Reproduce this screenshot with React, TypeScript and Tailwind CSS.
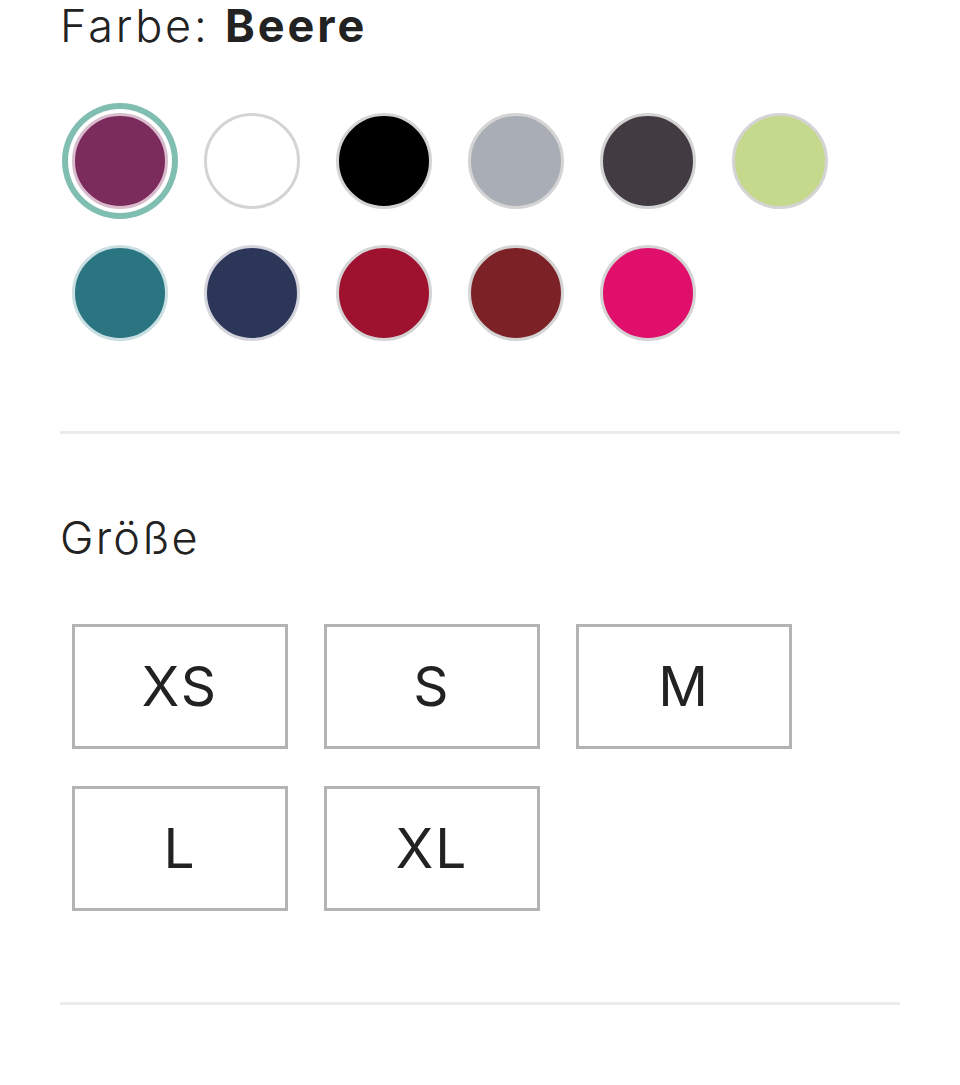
import React, { useState } from 'react';

const colors = [
  { name: 'Beere', hex: '#7c2b5d', border: '#d8bccd' },
  { name: 'Weiß', hex: '#ffffff', border: '#d4d4d4' },
  { name: 'Schwarz', hex: '#000000', border: '#d4d4d4' },
  { name: 'Grau', hex: '#a9adb5', border: '#d4d4d4' },
  { name: 'Anthrazit', hex: '#423c42', border: '#d4d4d4' },
  { name: 'Limette', hex: '#c5d98c', border: '#d4d4d4' },
  { name: 'Petrol', hex: '#2a7581', border: '#c9dfe2' },
  { name: 'Navy', hex: '#2b3659', border: '#d4d4dc' },
  { name: 'Rot', hex: '#9e1230', border: '#d4d4d4' },
  { name: 'Bordeaux', hex: '#7c2226', border: '#d4d4d4' },
  { name: 'Pink', hex: '#df0f6b', border: '#d4d4d4' },
];

const sizes = ['XS', 'S', 'M', 'L', 'XL'];

export default function App() {
  const [selectedColor, setSelectedColor] = useState(0);
  const [selectedSize, setSelectedSize] = useState<string | null>(null);

  return (
    <div
      className="w-[960px] h-[1085px] bg-white text-[#222] overflow-hidden"
      style={{ fontFamily: 'Inter, "DejaVu Sans", sans-serif' }}
    >
      <div className="px-[60px]">
        {/* Farbe */}
        <h2 className="text-[45px] leading-none font-light tracking-[2.8px] mt-[3px]">
          Farbe: <span className="font-bold tracking-[3px]">{colors[selectedColor].name}</span>
        </h2>

        <div className="grid grid-cols-[repeat(6,96px)] gap-x-[36px] gap-y-[36px] pl-[12px] mt-[65px]">
          {colors.map((c, i) => (
            <button
              key={c.name}
              type="button"
              onClick={() => setSelectedColor(i)}
              title={c.name}
              className={
                i === selectedColor
                  ? 'w-[96px] h-[96px] rounded-full border-[3px] shadow-[0_0_0_4px_#ffffff,0_0_0_10px_#80beb1]'
                  : 'w-[96px] h-[96px] rounded-full border-[3px]'
              }
              style={{ backgroundColor: c.hex, borderColor: c.border }}
            />
          ))}
        </div>

        <div className="h-[3px] bg-[#ebebeb] mt-[90px]" />

        {/* Größe */}
        <h2 className="text-[45px] leading-none font-light tracking-[2.2px] mt-[81px]">Größe</h2>

        <div className="grid grid-cols-[repeat(3,216px)] gap-x-[36px] gap-y-[37px] pl-[12px] mt-[64px]">
          {sizes.map((s) => (
            <button
              key={s}
              type="button"
              onClick={() => setSelectedSize(s)}
              className={
                selectedSize === s
                  ? 'h-[125px] border-[3px] border-[#222] flex items-center justify-center text-[55px] font-normal tracking-[2px]'
                  : 'h-[125px] border-[3px] border-[#b3b3b3] flex items-center justify-center text-[55px] font-normal tracking-[2px]'
              }
            >
              {s}
            </button>
          ))}
        </div>

        <div className="h-[3px] bg-[#ebebeb] mt-[91px]" />
      </div>
    </div>
  );
}
